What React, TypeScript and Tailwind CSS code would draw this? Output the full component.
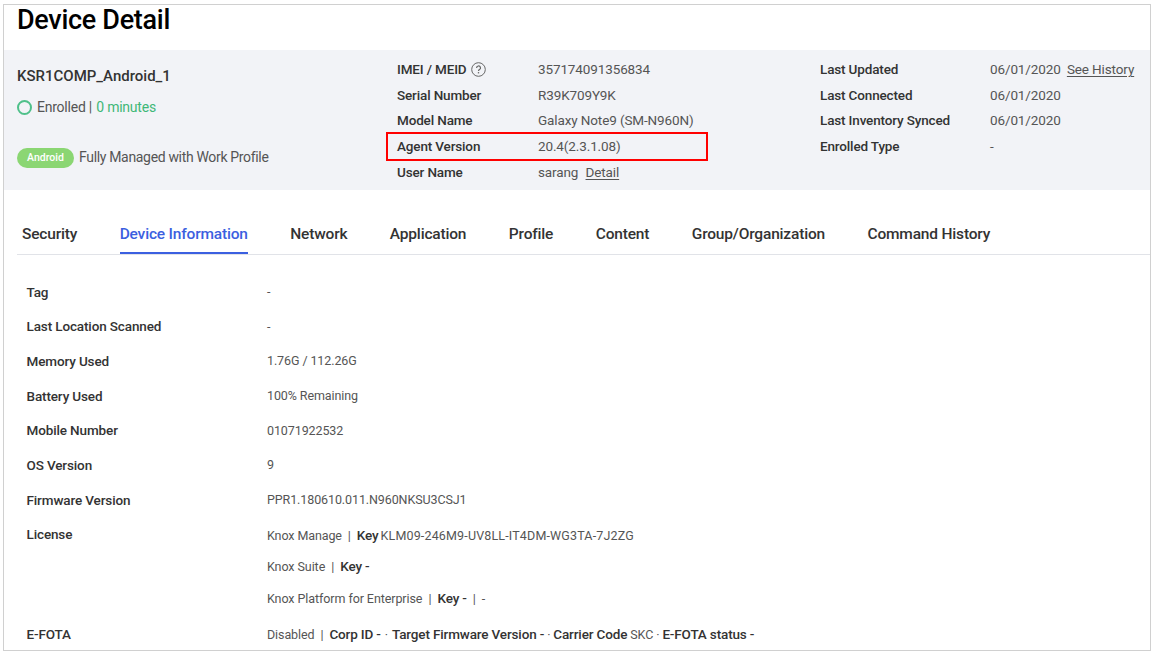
import { ReactNode } from "react";

const tabs = [
  "Security",
  "Device Information",
  "Network",
  "Application",
  "Profile",
  "Content",
  "Group/Organization",
  "Command History",
];

const B = ({ children }: { children: ReactNode }) => (
  <span className="text-[13.5px] font-medium tracking-[-0.15px] text-[#333]">{children}</span>
);

function HelpIcon() {
  return (
    <svg className="ml-[5px] size-[15px]" viewBox="0 0 15 15" fill="none" stroke="#666" strokeWidth="1">
      <circle cx="7.5" cy="7.5" r="6.8" />
      <path d="M5.6 5.9a1.95 1.95 0 1 1 2.9 1.7c-.7.4-1 .7-1 1.4" strokeWidth="1.2" />
      <path d="M7.5 10.1v1.3" strokeWidth="1.3" />
    </svg>
  );
}

function SummaryRow({ label, value, labelWidth }: { label: ReactNode; value: ReactNode; labelWidth: string }) {
  return (
    <div className="flex h-[25.6px] items-center whitespace-nowrap">
      <dt className={`flex items-center font-medium tracking-[-0.15px] text-[#333] ${labelWidth}`}>{label}</dt>
      <dd className="tracking-[-0.12px] text-[#555]">{value}</dd>
    </div>
  );
}

function InfoRow({ label, children }: { label: string; children: ReactNode }) {
  return (
    <div className="flex h-[34.7px] items-center whitespace-nowrap">
      <dt className="w-[240.5px] text-[13.5px] font-medium tracking-[-0.13px] text-[#333]">{label}</dt>
      <dd className="pt-px text-[12.5px] tracking-[-0.1px] text-[#555]">{children}</dd>
    </div>
  );
}

export default function App() {
  return (
    <div className="h-[655px] w-[1155px] overflow-hidden bg-white pl-[3px] pt-1 font-[Roboto,sans-serif]">
      <main className="flex h-[647px] w-[1148px] flex-col overflow-hidden border border-[#d0d0d0]">
        <h1 className="h-[45px] shrink-0 pl-[13px] text-[27px] font-medium leading-[31px] tracking-[-0.3px] text-black">
          Device Detail
        </h1>

        <section className="flex h-[140px] shrink-0 bg-[#f2f3f7] text-[13.5px]">
          <div className="flex w-[393px] flex-col pl-[13px]">
            <h2 className="mt-4 text-[15px] font-medium leading-5 text-[#333]">KSR1COMP_Android_1</h2>
            <div className="mt-[11px] flex h-5 items-center text-[14px] tracking-[-0.23px] text-[#555]">
              <span className="mr-[5px] size-[15px] rounded-full border-2 border-[#4fc08a]" />
              <span>
                Enrolled&nbsp;| <span className="ml-px text-[#3fb878]">0 minutes</span>
              </span>
            </div>
            <div className="mt-[30px] flex h-5 items-center text-[14px] tracking-[-0.33px] text-[#555]">
              <span className="mr-[5px] mt-px flex h-5 w-[57px] items-center justify-center rounded-full bg-[#8bd673] text-[10.5px] font-medium tracking-normal text-white">
                Android
              </span>
              <span>Fully Managed with Work Profile</span>
            </div>
          </div>

          <dl className="relative w-[423px] pt-[6.6px]">
            <SummaryRow labelWidth="w-[141px]" label={<>IMEI / MEID <HelpIcon /></>} value="357174091356834" />
            <SummaryRow labelWidth="w-[141px]" label="Serial Number" value="R39K709Y9K" />
            <SummaryRow labelWidth="w-[141px]" label="Model Name" value="Galaxy Note9 (SM-N960N)" />
            <SummaryRow labelWidth="w-[141px]" label="Agent Version" value="20.4(2.3.1.08)" />
            <SummaryRow
              labelWidth="w-[141px]"
              label="User Name"
              value={<>sarang <span className="ml-1 underline underline-offset-2">Detail</span></>}
            />
            <div className="absolute left-[-11px] top-[82px] h-[29px] w-[322px] border-2 border-[#ff0000]" />
          </dl>

          <dl className="pt-[6.6px]">
            <SummaryRow
              labelWidth="w-[170px]"
              label="Last Updated"
              value={<>06/01/2020 <span className="ml-[3px] underline underline-offset-2">See History</span></>}
            />
            <SummaryRow labelWidth="w-[170px]" label="Last Connected" value="06/01/2020" />
            <SummaryRow labelWidth="w-[170px]" label="Last Inventory Synced" value="06/01/2020" />
            <SummaryRow labelWidth="w-[170px]" label="Enrolled Type" value="-" />
          </dl>
        </section>

        <nav className="ml-[13px] mt-[26px] flex h-[39px] shrink-0 gap-[42.5px] border-b border-[#e1e3e8] pl-[5px]">
          {tabs.map((tab) => (
            <button
              key={tab}
              className={
                tab === "Device Information"
                  ? "h-[38px] whitespace-nowrap border-b-2 border-[#3b5fe0] pt-0.5 text-[15.5px] font-medium tracking-[-0.18px] text-[#3b5fe0]"
                  : "h-[38px] whitespace-nowrap border-b-2 border-transparent pt-0.5 text-[15.5px] font-medium tracking-[-0.18px] text-[#333]"
              }
            >
              {tab}
            </button>
          ))}
        </nav>

        <dl className="mt-[19.4px] pl-[22.5px]">
          <InfoRow label="Tag">-</InfoRow>
          <InfoRow label="Last Location Scanned">-</InfoRow>
          <InfoRow label="Memory Used">1.76G / 112.26G</InfoRow>
          <InfoRow label="Battery Used">100% Remaining</InfoRow>
          <InfoRow label="Mobile Number">01071922532</InfoRow>
          <InfoRow label="OS Version">9</InfoRow>
          <InfoRow label="Firmware Version">PPR1.180610.011.N960NKSU3CSJ1</InfoRow>
          <InfoRow label="License">
            Knox Manage&nbsp; | &nbsp;<B>Key</B> <span className="-ml-px tracking-[0.16px]">KLM09-246M9-UV8LL-IT4DM-WG3TA-7J2ZG</span>
          </InfoRow>
          <div className="flex flex-col whitespace-nowrap pb-px pl-[240.5px] text-[12.5px] tracking-[-0.08px] text-[#555]">
            <div className="flex h-[29px] items-baseline whitespace-pre pt-[4px]">Knox Suite  |  <B>Key -</B></div>
            <div className="flex h-[35px] items-baseline whitespace-pre pt-[7px]">Knox Platform for Enterprise  |  <B>Key -</B>  |  -</div>
          </div>
          <InfoRow label="E-FOTA">
            Disabled&nbsp; | &nbsp;<B>Corp ID -</B> <span className="mx-px">·</span> <B>Target Firmware Version -</B> · <B>Carrier Code</B> SKC · <B>E-FOTA status -</B>
          </InfoRow>
        </dl>
      </main>
    </div>
  );
}
